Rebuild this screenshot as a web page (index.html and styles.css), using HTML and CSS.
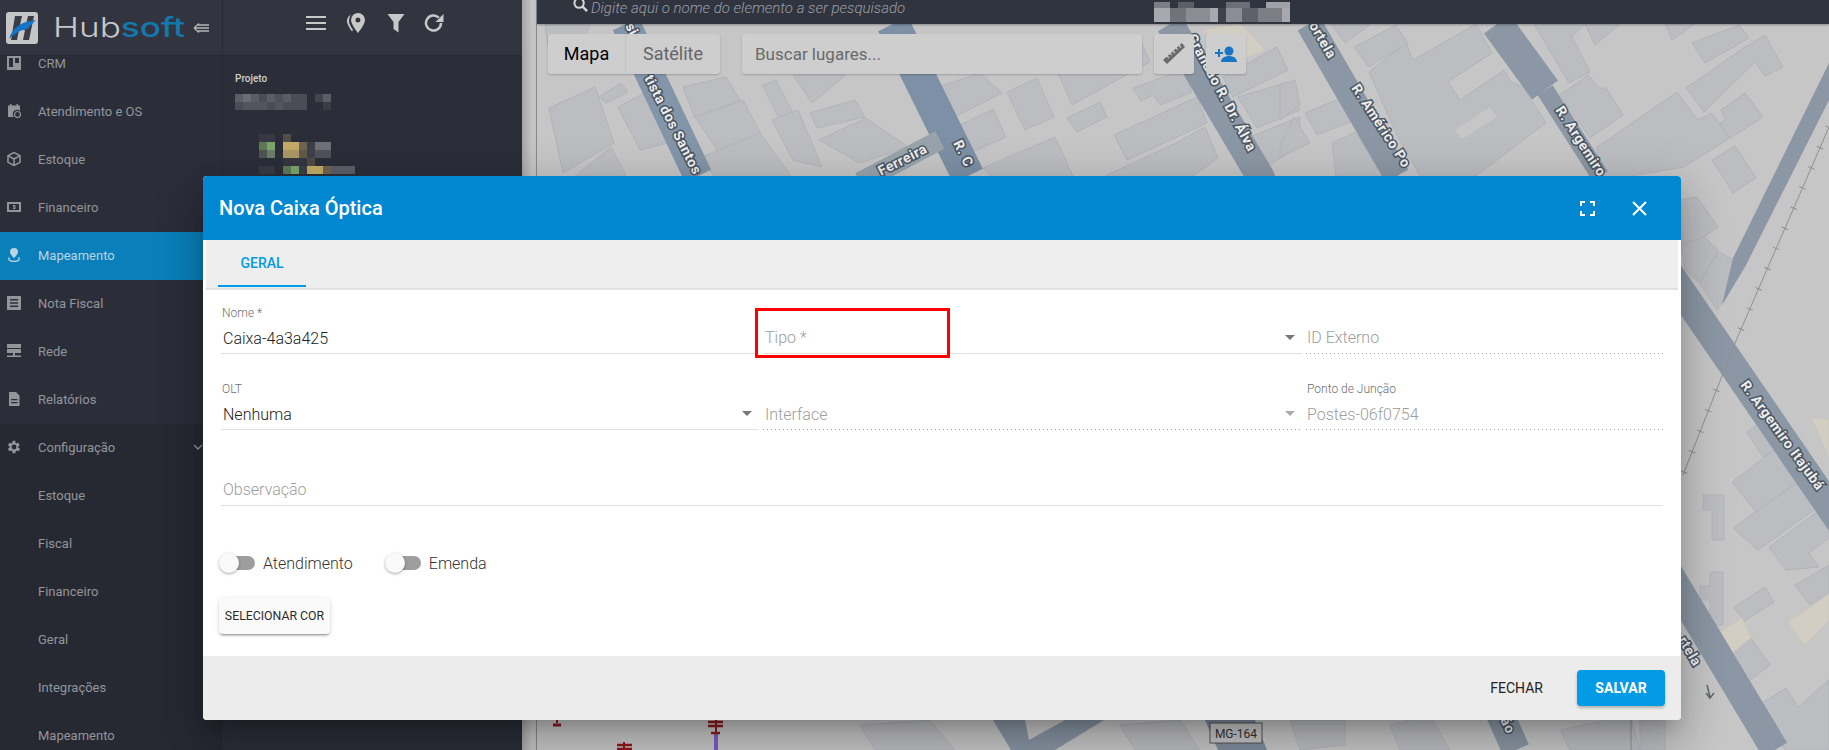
FILE: index.html
```html
<!DOCTYPE html>
<html lang="pt">
<head>
<meta charset="utf-8">
<title>Hubsoft - Mapeamento</title>
<link rel="stylesheet" href="styles.css">
</head>
<body>
<div class="app">
  <aside class="sidebar">
    <header class="brand">
      <svg class="logo" viewBox="0 0 32 32"><rect width="32" height="32" rx="3" fill="#c6c6c6"/><path d="M9 4h7l-2 9h6l2-9h6l-5 24h-6l2-10h-6l-2 10H5z" fill="#3a3d46"/><path d="M3 27C6 16 16 9 30 8c-4 3-6 7-9 9-7 1-13 5-18 10z" fill="#1476c8"/></svg>
      <span class="brand-name">Hub<b>soft</b></span>
      <svg class="brand-arrow" viewBox="0 0 16 12"><path d="M1 6l5-4.500M1 6l5 4.500M1 6h15M5 3h11M5 9h11" fill="none" stroke="#b5b5b5" stroke-width="1.300"/></svg>
    </header>
    <nav class="nav">
      <a class="nav-item"><svg viewBox="0 0 14 14"><path d="M0 0h14v14H0zM2 2v9h4V2zM8 2v5h4V2z" fill-rule="evenodd"/></svg>CRM</a>
      <a class="nav-item"><svg viewBox="0 0 14 14"><path d="M3 0h1.500v1.500h5V0H11v1.500h2V7a4 4 0 0 0-6 6H1V1.500h2z"/><circle cx="10.500" cy="10.500" r="3" fill="none" stroke="currentColor" stroke-width="1.200"/></svg>Atendimento e OS</a>
      <a class="nav-item"><svg viewBox="0 0 14 14"><path d="M7 .5l6 3.200v6.600l-6 3.200-6-3.200V3.700z M7 7l6-3.300M7 7L1 3.700M7 7v6.500" fill="none" stroke="currentColor" stroke-width="1.500"/></svg>Estoque</a>
      <a class="nav-item"><svg viewBox="0 0 14 14"><path d="M0 2h14v10H0zM2 4v6h10V4z" fill-rule="evenodd"/><path d="M6 5h2.500v1H7v.6h1.500V9H6V8h1.500v-.5H6z"/></svg>Financeiro</a>
      <a class="nav-item nav-active"><svg viewBox="0 0 14 14"><path d="M7 0a4 4 0 0 1 4 4c0 2.500-4 6-4 6S3 6.500 3 4a4 4 0 0 1 4-4z"/><path d="M2.500 9.500C.5 11 2.500 13.500 7 13.500s6.500-2.500 4.500-4" fill="none" stroke="currentColor" stroke-width="1.300"/></svg>Mapeamento</a>
      <a class="nav-item"><svg viewBox="0 0 14 14"><path d="M0 0h14v14H0zM3 3v1.500h8V3zM3 6.200v1.500h8V6.200zM3 9.500V11h8V9.500z" fill-rule="evenodd"/></svg>Nota Fiscal</a>
      <a class="nav-item"><svg viewBox="0 0 14 14"><path d="M0 0h14v4H0zM0 5h14v4H0zM6 9h2v2.500h6V13H0v-1.500h6z"/></svg>Rede</a>
      <a class="nav-item"><svg viewBox="0 0 14 14"><path d="M2 0h7l3.500 3.500V14H2zM4 7v1.300h6.500V7zM4 10v1.300h6.500V10z" fill-rule="evenodd"/></svg>Relatórios</a>
      <div class="nav-group">
        <a class="nav-item"><svg viewBox="2 2 20 20"><path d="M19.400 13a7.500 7.500 0 0 0 0-2l2.100-1.600-2-3.500-2.500 1a7.500 7.500 0 0 0-1.700-1L15.300 3.200h-4l-.4 2.700a7.500 7.500 0 0 0-1.700 1l-2.500-1-2 3.500L6.800 11a7.500 7.500 0 0 0 0 2l-2.100 1.600 2 3.500 2.500-1a7.500 7.500 0 0 0 1.700 1l.4 2.700h4l.4-2.700a7.500 7.500 0 0 0 1.700-1l2.500 1 2-3.500zM13.300 15.500a3.500 3.500 0 1 1 0-7 3.500 3.500 0 0 1 0 7z" transform="translate(-1.300)" fill-rule="evenodd"/></svg>Configuração<svg class="chev" viewBox="0 0 10 6"><path d="M1 1l4 4 4-4" fill="none" stroke="currentColor" stroke-width="1.300"/></svg></a>
        <a class="nav-item">Estoque</a>
        <a class="nav-item">Fiscal</a>
        <a class="nav-item">Financeiro</a>
        <a class="nav-item">Geral</a>
        <a class="nav-item">Integrações</a>
        <a class="nav-item">Mapeamento</a>
      </div>
    </nav>
  </aside>

  <section class="panel">
    <div class="panel-tools">
      <svg class="tool" viewBox="0 0 20 14"><path d="M0 1h20M0 7h20M0 13h20" stroke="#c8c8c8" stroke-width="2"/></svg>
      <svg class="tool" viewBox="0 0 20 20"><path d="M5 1.500C2.500 3 .5 6 1 9c.5 3 3 6.500 5 9.500l1-1.500C5 14 3 11 3 8c0-2.500 1-5 2-6.500z" fill="#c8c8c8"/><path d="M12 0a7 7 0 0 1 7 7c0 4.500-7 13-7 13S5 11.500 5 7a7 7 0 0 1 7-7zm0 4.500a2.500 2.500 0 1 0 0 5 2.500 2.500 0 0 0 0-5z" fill="#c8c8c8" fill-rule="evenodd"/></svg>
      <svg class="tool" viewBox="0 0 20 20"><path d="M1.500 1h17l-6 8v10.500L7.500 16V9z" fill="#c8c8c8"/></svg>
      <svg class="tool tool-last" viewBox="0 0 20 20"><path d="M17 10a7.500 7.500 0 1 1-2.200-5.300" fill="none" stroke="#c8c8c8" stroke-width="2.500"/><path d="M19.500 1v8h-8z" fill="#c8c8c8"/></svg>
    </div>
    <div class="panel-body">
      <div class="panel-label">Projeto</div>
      <svg class="mosaic" viewBox="0 0 120 88">
        <g fill="#5b5d66"><rect width="8" height="8" fill="#5c5e67"/><rect x="8" width="8" height="8" fill="#6a6c74"/><rect x="16" width="8" height="8"/><rect x="24" width="8" height="8" fill="#4a4c56"/><rect x="32" width="8" height="8"/><rect x="40" width="8" height="8" fill="#4d4f59"/><rect x="48" width="8" height="8"/><rect x="56" width="16" height="8" fill="#4a4c56"/><rect x="80" width="8" height="8" fill="#42444e"/><rect x="88" width="8" height="8" fill="#5c5e67"/></g>
        <g fill="#4a4c56"><rect y="8" width="8" height="8"/><rect x="8" y="8" width="24" height="8" fill="#53555e"/><rect x="32" y="8" width="8" height="8"/><rect x="40" y="8" width="8" height="8" fill="#53555e"/><rect x="48" y="8" width="24" height="8"/><rect x="88" y="8" width="8" height="8" fill="#393b45"/></g>
        <rect x="24" y="40" width="16" height="8" fill="#373943"/><rect x="48" y="40" width="8" height="8" fill="#544f46"/>
        <rect x="24" y="48" width="8" height="8" fill="#5d7a55"/><rect x="32" y="48" width="8" height="8" fill="#7ba66b"/><rect x="48" y="48" width="16" height="8" fill="#c3ab66"/><rect x="64" y="48" width="8" height="8" fill="#6e6652"/><rect x="72" y="48" width="8" height="8" fill="#3d3f49"/><rect x="80" y="48" width="16" height="8" fill="#6e7078"/>
        <rect x="24" y="56" width="8" height="8" fill="#4f5355"/><rect x="32" y="56" width="8" height="8" fill="#6e7c6b"/><rect x="48" y="56" width="16" height="8" fill="#ab9762"/><rect x="64" y="56" width="8" height="8" fill="#62594a"/><rect x="72" y="56" width="8" height="8" fill="#3d3f49"/><rect x="80" y="56" width="16" height="8" fill="#50525b"/>
        <rect x="48" y="64" width="24" height="8" fill="#343640"/><rect x="72" y="64" width="8" height="8" fill="#4e4b44"/>
        <rect x="24" y="72" width="16" height="8" fill="#383a44"/><rect x="48" y="72" width="8" height="8" fill="#5d7a55"/><rect x="56" y="72" width="8" height="8" fill="#7ba66b"/><rect x="64" y="72" width="8" height="8" fill="#3d3f49"/><rect x="72" y="72" width="16" height="8" fill="#c3ab66"/><rect x="88" y="72" width="8" height="8" fill="#6e6652"/><rect x="96" y="72" width="24" height="8" fill="#5c5e67"/>
      </svg>
    </div>
  </section>

  <div class="gutter"></div>

  <main class="main">
    <div class="topbar">
      <svg class="search-icon" viewBox="0 0 16 16"><circle cx="6.500" cy="6.500" r="5" fill="none" stroke="#d6d6d6" stroke-width="2.200"/><path d="M10 10l5 5" stroke="#d6d6d6" stroke-width="2.500"/></svg>
      <span class="search-hint">Digite aqui o nome do elemento a ser pesquisado</span>
      <svg class="top-mosaic" viewBox="0 0 146 22">
        <rect width="16" height="6" y="2" fill="#7c7e86"/><rect x="24" y="2" width="16" height="6" fill="#5d5f68"/><rect x="72" y="2" width="24" height="6" fill="#6d6f78"/><rect x="112" y="2" width="24" height="6" fill="#a0a2a8"/>
        <rect y="8" width="16" height="14" fill="#a7a9ae"/><rect x="16" y="8" width="16" height="14" fill="#71737b"/><rect x="32" y="8" width="24" height="14" fill="#8b8d94"/><rect x="56" y="8" width="8" height="14" fill="#a7a9ae"/><rect x="64" y="8" width="8" height="14" fill="#3f424c"/><rect x="72" y="8" width="16" height="14" fill="#8b8d94"/><rect x="88" y="8" width="16" height="14" fill="#5f616a"/><rect x="104" y="8" width="24" height="14" fill="#7c7e86"/><rect x="128" y="8" width="8" height="14" fill="#a7a9ae"/>
      </svg>
    </div>
    <div class="map">
      <svg class="map-canvas" viewBox="537 24 1292 726">
        <g fill="#bcbdc1" stroke="#b3b4bb" stroke-width="1">
          <polygon points="549,108 595,87 614,143 563,173"/><polygon points="575,176 611,147 626,176"/><polygon points="599,97 621,83 628,92 606,103"/>
          <polygon points="618,107 650,90 668,143 640,150"/><polygon points="545,24 590,24 580,50 550,60"/>
          <polygon points="683,87 726,77 740,100 695,118"/><polygon points="695,117 743,100 764,140 719,153"/><polygon points="702,157 760,133 791,176 714,176"/>
          <polygon points="762,85 776,80 793,113 779,118"/><polygon points="772,120 798,110 822,167 793,160"/><polygon points="793,75 846,75 812,103"/>
          <polygon points="810,113 855,100 865,117 817,128"/><polygon points="819,140 866,118 908,147 860,163"/>
          <polygon points="935,88 980,73 1002,93 945,122"/><polygon points="960,125 993,109 1006,137 972,152"/><polygon points="983,168 1055,137 1073,176 990,176"/>
          <polygon points="1007,92 1037,78 1054,117 1025,130"/><polygon points="1067,118 1100,102 1107,117 1077,132"/><polygon points="1114,135 1197,97 1207,123 1127,160"/>
          <polygon points="1133,88 1183,70 1192,92 1160,105 1153,95 1141,101"/><polygon points="1058,73 1140,40 1150,62 1072,105"/>
          <polygon points="1105,176 1176,143 1205,127 1218,158 1193,176"/>
          <polygon points="1247,138 1300,117 1300,145 1267,167"/><polygon points="1238,97 1288,82 1300,110 1257,128"/><polygon points="1223,77 1277,47 1288,70 1233,97"/>
          <polygon points="1305,113 1341,98 1350,122 1317,135"/><polygon points="1280,147 1294,117 1310,143 1280,157"/><polygon points="1332,143 1355,132 1385,176 1336,176"/>
          <polygon points="1280,85 1295,80 1300,105 1280,120"/><polygon points="1331,24 1371,24 1345,43"/><polygon points="1354,47 1396,25 1408,43 1369,67"/>
          <polygon points="1369,72 1406,43 1413,60 1476,24 1492,53 1448,82 1460,100 1504,70 1511,82 1523,87 1546,123 1476,176 1420,176 1396,133"/>
          <polygon points="1534,24 1585,24 1572,37 1590,72 1569,83"/><polygon points="1585,24 1620,24 1595,45"/><polygon points="1665,24 1695,24 1672,40"/>
          <polygon points="1560,95 1588,75 1599,88 1606,88 1623,115 1590,138"/><polygon points="1597,147 1677,92 1698,120 1712,113 1730,138 1684,167 1630,176 1600,176"/>
          <polygon points="1692,43 1739,25 1749,38 1705,63"/><polygon points="1686,88 1745,47 1765,35 1783,67 1765,76 1755,62 1704,112"/>
          <polygon points="1721,110 1745,93 1763,117 1730,138 1720,123 1726,120"/><polygon points="1712,160 1735,146 1756,178 1733,193"/>
          <polygon points="1681,200 1697,197 1718,227 1681,253"/><polygon points="1681,245 1704,237 1718,250 1700,283 1685,270"/><polygon points="1700,283 1718,252 1745,265 1717,310"/>
          <polygon points="1747,432 1761,422 1775,450 1763,457"/><polygon points="1732,482 1777,448 1798,482 1756,512"/><polygon points="1733,528 1798,482 1821,505 1758,550"/>
          <polygon points="1769,547 1817,512 1829,515 1829,538 1809,553 1819,567 1786,570"/><polygon points="1795,585 1829,565 1829,592 1810,605"/>
          <polygon points="1734,607 1765,587 1774,602 1744,621"/><polygon points="1716,665 1751,638 1770,665 1735,692"/>
          <polygon points="1754,708 1786,688 1798,707 1829,680 1829,750 1785,750 1770,730"/>
          <polygon points="1703,495 1724,495 1724,540 1712,540 1712,510 1703,510"/><polygon points="1710,572 1723,572 1723,625 1710,625 1710,600 1700,600 1700,586 1710,586"/>
          <polygon points="1290,720 1345,720 1345,745 1300,750"/><polygon points="1120,725 1180,720 1200,750 1135,750"/>
          <polygon points="1390,725 1430,715 1450,750 1400,750"/><polygon points="1560,730 1630,715 1640,750 1570,750"/>
          <polygon points="1640,720 1665,720 1665,750 1640,750"/>
          <polygon points="860,725 930,720 955,750 875,750"/>
        </g>
        <polygon points="1455,130 1490,107 1497,117 1462,139" fill="#c6c6c6"/>
        <g fill="#d2cec4" stroke="#cfc9b9"><polygon points="1700,645 1742,618 1751,638 1716,665"/><polygon points="1788,622 1829,595 1829,620 1805,645"/><polygon points="1812,418 1829,420 1829,457"/><polygon points="1203,30 1240,24 1265,50 1240,60"/></g>
        <g fill="none" stroke="#8b97a4">
          <path d="M626 24L698 176" stroke-width="29" stroke="#8395a8"/>
          <path d="M893 24L968 176" stroke-width="33" stroke="#7d90a6"/>
          <path d="M860 182L940 140" stroke-width="20" stroke="#98a3ab"/>
          <path d="M1170 24L1260 176L1516 750" stroke-width="28"/>
          <path d="M1309 24L1397 176" stroke-width="26"/>
          <path d="M1497 24L1545 90" stroke-width="32"/><path d="M1545 90L1600 176" stroke-width="18"/>
          <path d="M1667 270L1840 522" stroke-width="28"/>
          <path d="M1667 570L1775 750" stroke-width="28"/>
        </g>
        <polygon points="1205,720 1255,720 1267,750 1218,750" fill="#7e8c9c"/>
        <polygon points="993,720 1025,720 1029,740 1065,720 1104,720 1055,750 1011,750" fill="#8794a3"/>
        <polygon points="1829,63 1829,100 1745,267 1722,305 1733,258" fill="#8b97a4"/>
        <path d="M1829 127L1735 343L1683 475" fill="none" stroke="#8f9096" stroke-width="1"/>
        <path d="M1829 127L1735 343L1683 475" fill="none" stroke="#8f9096" stroke-width="7" stroke-dasharray="1 21"/>
        <path d="M1631 720V750" stroke="#8f9096" stroke-width="1"/>
        <g class="street-names">
          <text transform="translate(625,26) rotate(62)">si</text>
          <text transform="translate(644,78) rotate(63)">tista dos Santos</text>
          <text transform="translate(953,143) rotate(64)">R. C</text>
          <text transform="translate(881,176) rotate(-27)">Ferreira</text>
          <text transform="translate(1187,37) rotate(62)">Grandão R. Dr. Álva</text>
          <text transform="translate(1304,17) rotate(60)">Portela</text>
          <text transform="translate(1351,88) rotate(57)">R. Américo Po</text>
          <text transform="translate(1555,110) rotate(57)">R. Argemiro</text>
          <text transform="translate(1740,385) rotate(54)">R. Argemiro Itajubá</text>
          <text transform="translate(1678,640) rotate(60)">rtela</text>
          <text transform="translate(1500,720) rotate(64)">ão</text>
        </g>
        <path d="M1707 685l3 12m-4-4l4 5 4-5" fill="none" stroke="#60676f" stroke-width="1.500"/>
        <rect x="1210" y="723" width="52" height="20" fill="#c5c5c5" stroke="#555"/>
        <text class="shield" x="1236" y="738" text-anchor="middle">MG-164</text>
        <path d="M716 732V750" stroke="#7a5fc4" stroke-width="4"/>
        <path d="M716 720V732" stroke="#8e1b1f" stroke-width="2"/>
        <path d="M708 722h15M708 726h15M711 733h9" stroke="#8e1b1f" stroke-width="2.500"/>
        <path d="M557 720v3" stroke="#8e1b1f" stroke-width="2"/>
        <path d="M553 725h8" stroke="#8e1b1f" stroke-width="3"/>
        <path d="M624 742v8" stroke="#8e1b1f" stroke-width="2"/>
        <path d="M617 745h15M617 749h15" stroke="#8e1b1f" stroke-width="2.500"/>
      </svg>
      <div class="map-controls">
        <div class="map-type"><span class="type-on">Mapa</span><span class="type-off">Satélite</span></div>
        <div class="map-search">Buscar lugares...</div>
        <div class="map-btn"><svg viewBox="0 0 24 24"><path d="M1 18L20 1l3 4L5 22z" fill="#6b6b6b"/><path d="M5 14l2 2M8 11.500l1.500 1.500M11 9l2 2M14 6l1.500 1.500M17 3.500l2 2" stroke="#cecece" stroke-width="1.200"/></svg></div>
        <div class="map-btn"><svg viewBox="0 0 24 24"><circle cx="15" cy="9" r="4.500" fill="#1976c4"/><path d="M7 20c0-4 4-6 8-6s8 2 8 6z" fill="#1976c4"/><path d="M5 7v8M1 11h8" stroke="#1976c4" stroke-width="2"/></svg></div>
      </div>
    </div>
  </main>
</div>

<div class="modal">
  <header class="modal-head">
    <h2>Nova Caixa Óptica</h2>
    <svg class="head-icon expand" viewBox="0 0 15 15"><path d="M1 5V1h4M10 1h4v4M14 10v4h-4M5 14H1v-4" fill="none" stroke="#fff" stroke-width="2"/></svg>
    <svg class="head-icon" viewBox="0 0 15 15"><path d="M1 1l13 13M14 1L1 14" stroke="#fff" stroke-width="2"/></svg>
  </header>
  <div class="tabs"><span class="tab">GERAL</span></div>
  <div class="modal-body">
    <div class="form-row first">
      <div class="field"><label>Nome *</label><div class="value">Caixa-4a3a425</div></div>
      <div class="field select"><label></label><div class="value hint">Tipo *</div><i class="caret"></i></div>
      <div class="field off"><label></label><div class="value hint">ID Externo</div></div>
    </div>
    <div class="form-row">
      <div class="field select"><label>OLT</label><div class="value">Nenhuma</div><i class="caret"></i></div>
      <div class="field select off"><label></label><div class="value hint">Interface</div><i class="caret"></i></div>
      <div class="field off"><label>Ponto de Junção</label><div class="value hint">Postes-06f0754</div></div>
    </div>
    <div class="form-row wide">
      <div class="field"><label></label><div class="value hint">Observação</div></div>
    </div>
    <div class="toggles">
      <div class="toggle"><span class="switch"><span class="knob"></span></span>Atendimento</div>
      <div class="toggle"><span class="switch"><span class="knob"></span></span>Emenda</div>
    </div>
    <button class="color-btn">SELECIONAR COR</button>
    <div class="highlight"></div>
  </div>
  <footer class="modal-foot">
    <button class="btn-flat">FECHAR</button>
    <button class="btn-save">SALVAR</button>
  </footer>
</div>
</body>
</html>
```
FILE: styles.css
```css
* { box-sizing: border-box; }
html, body { margin: 0; height: 100%; overflow: hidden; }
body { font-family: Roboto, "Liberation Sans", sans-serif; position: relative; background: #292c37; }
.app { display: flex; width: 1829px; height: 750px; overflow: hidden; }

.sidebar { width: 222px; flex: none; background: #2b2e39; display: flex; flex-direction: column; overflow: hidden; }
.brand { position: relative; z-index: 2; height: 56px; flex: none; display: flex; align-items: center; padding: 0 0 0 6px; background: #32353f; border-bottom: 1px solid #272a33; }
.logo { width: 32px; height: 32px; flex: none; }
.brand-name { width: 131px; flex: none; margin-left: 15px; font-family: Inter, Roboto, sans-serif; font-size: 27px; font-weight: 300; color: #c8c8c8; line-height: 32px; transform: scaleX(1.3); transform-origin: left center; white-space: nowrap; }
.brand-name b { font-weight: 500; color: #1278ad; }
.brand-arrow { width: 16px; height: 12px; margin-left: 9px; flex: none; }
.nav { margin-top: -16px; }
.nav-item { display: flex; align-items: center; height: 48px; padding: 0 0 2px 38px; position: relative; font-size: 13px; font-weight: 400; color: #93959b; }
.nav-item svg { position: absolute; left: 7px; top: 16px; width: 14px; height: 14px; fill: currentColor; }
.nav-item svg.chev { left: 193px; top: 20px; width: 10px; height: 6px; }
.nav-active { background: #0a7fba; color: #bcd5e4; }
.nav-group { background: #262932; }

.panel { width: 300px; flex: none; background: #2b2e39; border-left: 1px solid #282b35; }
.panel-tools { height: 56px; display: flex; align-items: center; padding: 0 0 10px 83px; gap: 20px; background: #32353f; border-bottom: 1px solid #272a33; }
.tool { width: 20px; height: 20px; }
.tool-last { margin-left: -2px; }
.panel-body { padding: 16px 12px; }
.panel-label { font-size: 10px; font-weight: 500; line-height: 14px; color: #cfcfcf; }
.mosaic { display: block; width: 120px; height: 88px; margin-top: 8px; }

.gutter { width: 15px; flex: none; background: linear-gradient(90deg, #a4a4a4, #c4c4c4 70%); border-right: 1px solid #8a8a8a; }
.main { flex: 1; display: flex; flex-direction: column; min-width: 0; }
.topbar { position: relative; z-index: 1; height: 24px; flex: none; display: flex; align-items: flex-start; padding-left: 36px; background: #30343f; overflow: hidden; box-shadow: 0 1px 2px rgba(0,0,0,.3); }
.search-icon { width: 15px; height: 15px; margin-top: -3px; flex: none; }
.search-hint { width: 311px; flex: none; margin-left: 3px; font-size: 15px; font-weight: 300; font-style: italic; line-height: 16px; color: #9b9ea5; white-space: nowrap; }
.top-mosaic { width: 146px; height: 22px; margin-left: 252px; flex: none; }
.map { flex: 1; position: relative; background: #c6c6c6; overflow: hidden; }
.map-canvas { display: block; width: 1292px; height: 726px; }
.street-names text { font-family: Roboto, "Liberation Sans", sans-serif; font-size: 14px; font-weight: 700; letter-spacing: .5px; fill: #eeeeee; stroke: #4a5561; stroke-width: 3px; paint-order: stroke; }
.shield { font-family: Roboto, sans-serif; font-size: 12px; fill: #333; }
.map-controls { position: absolute; left: 11px; top: 10px; display: flex; }
.map-type { display: flex; height: 40px; margin-right: 22px; border-radius: 3px; background: #cecece; box-shadow: 0 1px 2px rgba(0,0,0,.2); font-size: 18px; line-height: 40px; }
.type-on { width: 78px; text-align: center; color: #000; border-right: 1px solid #c2c2c2; }
.type-off { width: 94px; text-align: center; color: #656565; }
.map-search { width: 400px; height: 40px; padding-left: 13px; border-radius: 3px; background: #cecece; box-shadow: 0 1px 2px rgba(0,0,0,.2); font-size: 17px; line-height: 40px; color: #6a6a6a; }
.map-btn { width: 40px; height: 40px; margin-left: 12px; display: flex; align-items: center; justify-content: center; border-radius: 3px; background: #cecece; box-shadow: 0 1px 2px rgba(0,0,0,.2); }
.map-btn svg { width: 24px; height: 24px; }

.modal { position: absolute; left: 203px; top: 176px; width: 1478px; height: 544px; display: flex; flex-direction: column; background: #fff; border-radius: 4px; box-shadow: 0 11px 15px -7px rgba(0,0,0,.2), 0 24px 38px 3px rgba(0,0,0,.14), 0 9px 46px 8px rgba(0,0,0,.12); overflow: hidden; }
.modal-head { height: 64px; flex: none; display: flex; align-items: center; padding: 0 34px 0 16px; background: #0288d1; }
.modal-head h2 { flex: 1; margin: 0; font-size: 20px; font-weight: 500; color: #fff; }
.head-icon { width: 15px; height: 15px; }
.expand { margin-right: 37px; }
.tabs { height: 50px; flex: none; margin: 0 3px; padding-left: 12px; background: #eee; border-bottom: 2px solid #e2e2e2; }
.tab { display: block; width: 88px; height: 47px; border-bottom: 2px solid #039be5; font-size: 14px; font-weight: 500; line-height: 46px; text-align: center; color: #039be5; }
.modal-body { flex: 1; position: relative; padding: 0 18px; }
.form-row { display: grid; grid-template-columns: 538px 539px 357px; column-gap: 4px; margin-bottom: 12px; }
.form-row.wide { grid-template-columns: 1fr; margin-bottom: 45px; }
.field { position: relative; height: 64px; padding-top: 16px; border-bottom: 1px solid #e0e0e0; }
.field label { display: block; height: 14px; margin-bottom: 6px; padding-left: 1px; font-size: 12px; font-weight: 300; line-height: 14px; color: #6f6f6f; }
.value { height: 24px; padding-left: 2px; font-size: 16px; font-weight: 300; line-height: 26px; color: #222; }
.field:nth-child(3) .value { padding-left: 1px; }
.hint { color: #9d9d9d; }
.first .hint, .wide .hint { line-height: 24px; }
.field.off { border-bottom: 0; background: repeating-linear-gradient(90deg, #9a9a9a 0 1px, transparent 1px 4px) left bottom / 100% 1px no-repeat; }
.caret { position: absolute; right: 7px; top: 45px; width: 0; height: 0; border-left: 5px solid transparent; border-right: 5px solid transparent; border-top: 5px solid #777; }
.off .caret { border-top-color: #aaa; }
.toggles { display: flex; gap: 34px; height: 24px; }
.toggle { display: flex; align-items: center; font-size: 16px; font-weight: 300; color: #333; }
.switch { position: relative; display: block; width: 34px; height: 14px; margin-right: 8px; background: #9e9e9e; border-radius: 7px; }
.knob { position: absolute; left: -2px; top: -3px; width: 20px; height: 20px; border-radius: 50%; background: #fafafa; box-shadow: 0 1px 3px rgba(0,0,0,.35); }
.color-btn { display: block; width: 111px; height: 36px; margin: 23px 0 0 -2px; padding: 0; border: 0; border-radius: 4px; background: #fafafa; box-shadow: 0 3px 1px -2px rgba(0,0,0,.2), 0 2px 2px rgba(0,0,0,.14), 0 1px 5px rgba(0,0,0,.12); font: 400 12.300px Roboto, sans-serif; color: #2a2a2a; white-space: nowrap; }
.highlight { position: absolute; left: 552px; top: 18px; width: 195px; height: 50px; border: 3px solid #f00; }
.modal-foot { height: 64px; flex: none; display: flex; align-items: center; justify-content: flex-end; padding: 0 16px 0 0; background: #ececec; }
.btn-flat { margin-right: 34px; padding: 0; border: 0; background: none; font: 400 14px Roboto, sans-serif; color: #222; }
.btn-save { width: 88px; height: 36px; border: 0; border-radius: 4px; background: #039be5; box-shadow: 0 2px 3px rgba(0,0,0,.25); font: 700 14px Roboto, sans-serif; color: #fff; }
```
